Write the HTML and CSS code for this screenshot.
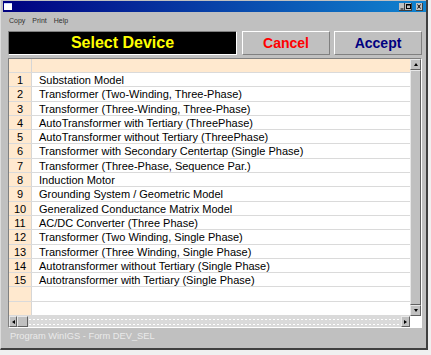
FILE: index.html
```html
<!DOCTYPE html>
<html lang="en">
<head>
    <meta charset="UTF-8">
    <title>Select Device</title>
    <link rel="stylesheet" href="styles.css">
</head>
<body>
    <div class="window">
        <div class="titlebar">
            <span class="app-icon"></span>
            <svg class="title-buttons" width="25" height="8" viewBox="0 0 25 8">
                <rect x="0" y="0" width="6" height="8" fill="#c0c0c0"/>
                <path d="M0 7.5H6M5.5 0V8" stroke="#404040" stroke-width="1"/>
                <path d="M1.5 6H4.5" stroke="#000" stroke-width="1"/>
                <rect x="6" y="0" width="7" height="8" fill="#c0c0c0"/>
                <path d="M6 7.5H13M12.5 0V8" stroke="#404040" stroke-width="1"/>
                <rect x="7.5" y="1.5" width="4" height="4" fill="none" stroke="#000" stroke-width="1"/>
                <path d="M7.5 2H11.5" stroke="#000" stroke-width="1"/>
                <rect x="17" y="0" width="7" height="8" fill="#c0c0c0"/>
                <path d="M17 7.5H24M23.5 0V8" stroke="#404040" stroke-width="1"/>
                <path d="M18.5 1.5L21.5 5.5M21.5 1.5L18.5 5.5" stroke="#000" stroke-width="1"/>
            </svg>
        </div>
        <ul class="menu">
            <li>Copy</li>
            <li>Print</li>
            <li>Help</li>
        </ul>
        <div class="toolbar">
            <div class="caption">Select Device</div>
            <button class="btn btn-cancel">Cancel</button>
            <button class="btn btn-accept">Accept</button>
        </div>
        <div class="grid">
            <div class="cells">
                <div class="row row-head"><span class="num"></span><span class="name"></span></div>
                <div class="row"><span class="num">1</span><span class="name">Substation Model</span></div>
                <div class="row"><span class="num">2</span><span class="name">Transformer (Two-Winding, Three-Phase)</span></div>
                <div class="row"><span class="num">3</span><span class="name">Transformer (Three-Winding, Three-Phase)</span></div>
                <div class="row"><span class="num">4</span><span class="name">AutoTransformer with Tertiary (ThreePhase)</span></div>
                <div class="row"><span class="num">5</span><span class="name">AutoTransformer without Tertiary (ThreePhase)</span></div>
                <div class="row"><span class="num">6</span><span class="name">Transformer with Secondary Centertap (Single Phase)</span></div>
                <div class="row"><span class="num">7</span><span class="name">Transformer (Three-Phase, Sequence Par.)</span></div>
                <div class="row"><span class="num">8</span><span class="name">Induction Motor</span></div>
                <div class="row"><span class="num">9</span><span class="name">Grounding System / Geometric Model</span></div>
                <div class="row"><span class="num">10</span><span class="name">Generalized Conductance Matrix Model</span></div>
                <div class="row"><span class="num">11</span><span class="name">AC/DC Converter (Three Phase)</span></div>
                <div class="row"><span class="num">12</span><span class="name">Transformer (Two Winding, Single Phase)</span></div>
                <div class="row"><span class="num">13</span><span class="name">Transformer (Three Winding, Single Phase)</span></div>
                <div class="row"><span class="num">14</span><span class="name">Autotransformer without Tertiary (Single Phase)</span></div>
                <div class="row"><span class="num">15</span><span class="name">Autotransformer with Tertiary (Single Phase)</span></div>
                <div class="row"><span class="num"></span><span class="name"></span></div>
                <div class="row"><span class="num"></span><span class="name"></span></div>
            </div>
            <div class="vscroll">
                <span class="sbtn"><span class="arrow arrow-up"></span></span>
                <span class="thumb"></span>
                <span class="sbtn"><span class="arrow arrow-down"></span></span>
            </div>
            <div class="hscroll">
                <span class="sbtn sbtn-left"><span class="arrow arrow-left"></span></span>
                <span class="hthumb"></span>
                <span class="track"></span>
                <span class="sbtn sbtn-right"><span class="arrow arrow-right"></span></span>
            </div>
            <div class="corner"></div>
        </div>
        <div class="status">Program WinIGS - Form DEV_SEL</div>
    </div>
</body>
</html>
```

FILE: styles.css
```css
body {
    margin: 0;
    padding: 0;
    background-color: #f0f0f0;
    font-family: "Liberation Sans", Arial, sans-serif;
}
.window {
    width: 428px;
    height: 350px;
    box-sizing: border-box;
    background: #c0c0c0;
    border-right: 2px solid #404040;
    border-bottom: 2px solid #404040;
    border-left: 1px solid #dcdcdc;
    overflow: hidden;
}
.titlebar {
    display: flex;
    align-items: center;
    height: 11px;
    margin: 1px 0 0 2px;
    padding: 0 2px 0 1px;
    background: linear-gradient(to right, #000080, #1084d0);
}
.app-icon {
    width: 8px;
    height: 6px;
    background: #fff;
    border-top: 1px solid #c8d8ff;
}
.title-buttons {
    margin-left: auto;
    display: block;
}
.menu {
    list-style: none;
    margin: 0;
    padding: 5px 0 0 8px;
    height: 14px;
    display: flex;
    gap: 7px;
    font-size: 7px;
    color: #303030;
}
.toolbar {
    display: flex;
    height: 24px;
    margin-left: 7px;
}
.caption {
    width: 229px;
    box-sizing: border-box;
    background: #000;
    color: #ffff00;
    font-weight: bold;
    font-size: 16px;
    line-height: 22px;
    text-align: center;
    border: 1px solid #808080;
    border-right-color: #fff;
    border-bottom-color: #fff;
}
.btn {
    width: 88px;
    margin-left: 5px;
    padding: 0;
    background: #c0c0c0;
    font-family: "Liberation Sans", Arial, sans-serif;
    font-weight: bold;
    font-size: 14px;
    border: 1px solid #fff;
    border-right-color: #808080;
    border-bottom-color: #808080;
}
.btn-accept {
    margin-left: 4px;
}
.btn-cancel {
    color: #ff0000;
}
.btn-accept {
    color: #000080;
}
.grid {
    display: grid;
    grid-template-columns: 401px 11px;
    grid-template-rows: 257px 11px;
    width: 414px;
    height: 270px;
    box-sizing: border-box;
    margin: 3px 0 0 7px;
    border: 1px solid #fff;
    border-top-color: #808080;
    border-left-color: #808080;
    background: #fff;
}
.cells {
    overflow: hidden;
    font-size: 11px;
    color: #000;
}
.row {
    display: flex;
    height: 14.3px;
    box-sizing: border-box;
    border-bottom: 1px solid #dadada;
}
.row-head {
    height: 14px;
    background: #ffe9cf;
}
.num {
    width: 23px;
    flex: none;
    box-sizing: border-box;
    background: #ffe9cf;
    border-right: 1px solid #d6d6d6;
    text-align: center;
    line-height: 15px;
}
.name {
    padding-left: 7px;
    line-height: 15px;
    white-space: nowrap;
}
.vscroll {
    display: flex;
    flex-direction: column;
    background: #c0c0c0;
}
.sbtn {
    display: flex;
    align-items: center;
    justify-content: center;
    flex: none;
    height: 11px;
    box-sizing: border-box;
    background: #c0c0c0;
    border: 1px solid #e8e8e8;
    border-right-color: #606060;
    border-bottom-color: #606060;
}
.thumb {
    flex: 1;
    background: #c0c0c0;
    border: 1px solid #e8e8e8;
    border-right-color: #606060;
    border-bottom-color: #606060;
}
.arrow {
    width: 0;
    height: 0;
    border: 2px solid transparent;
}
.arrow-up {
    border-bottom: 3px solid #000;
    border-top: none;
}
.arrow-down {
    border-top: 3px solid #000;
    border-bottom: none;
}
.arrow-left {
    border-right: 3px solid #000;
    border-left: none;
}
.arrow-right {
    border-left: 3px solid #000;
    border-right: none;
}
.hscroll {
    display: flex;
    background-color: #d8d8d8;
}
.sbtn-left {
    width: 8px;
}
.sbtn-right {
    width: 9px;
}
.hthumb {
    width: 11px;
    background: #c0c0c0;
    border: 1px solid #e8e8e8;
    border-right-color: #606060;
    border-bottom-color: #606060;
    box-sizing: border-box;
}
.track {
    flex: 1;
    background-color: #dadada;
    background-image: radial-gradient(circle, #fff 0.6px, transparent 0.9px);
    background-size: 4px 5px;
    background-position: 0 1px;
}
.corner {
    background: #fff;
}
.status {
    padding: 3px 0 0 9px;
    font-size: 9.3px;
    color: #eaeaea;
}
```
